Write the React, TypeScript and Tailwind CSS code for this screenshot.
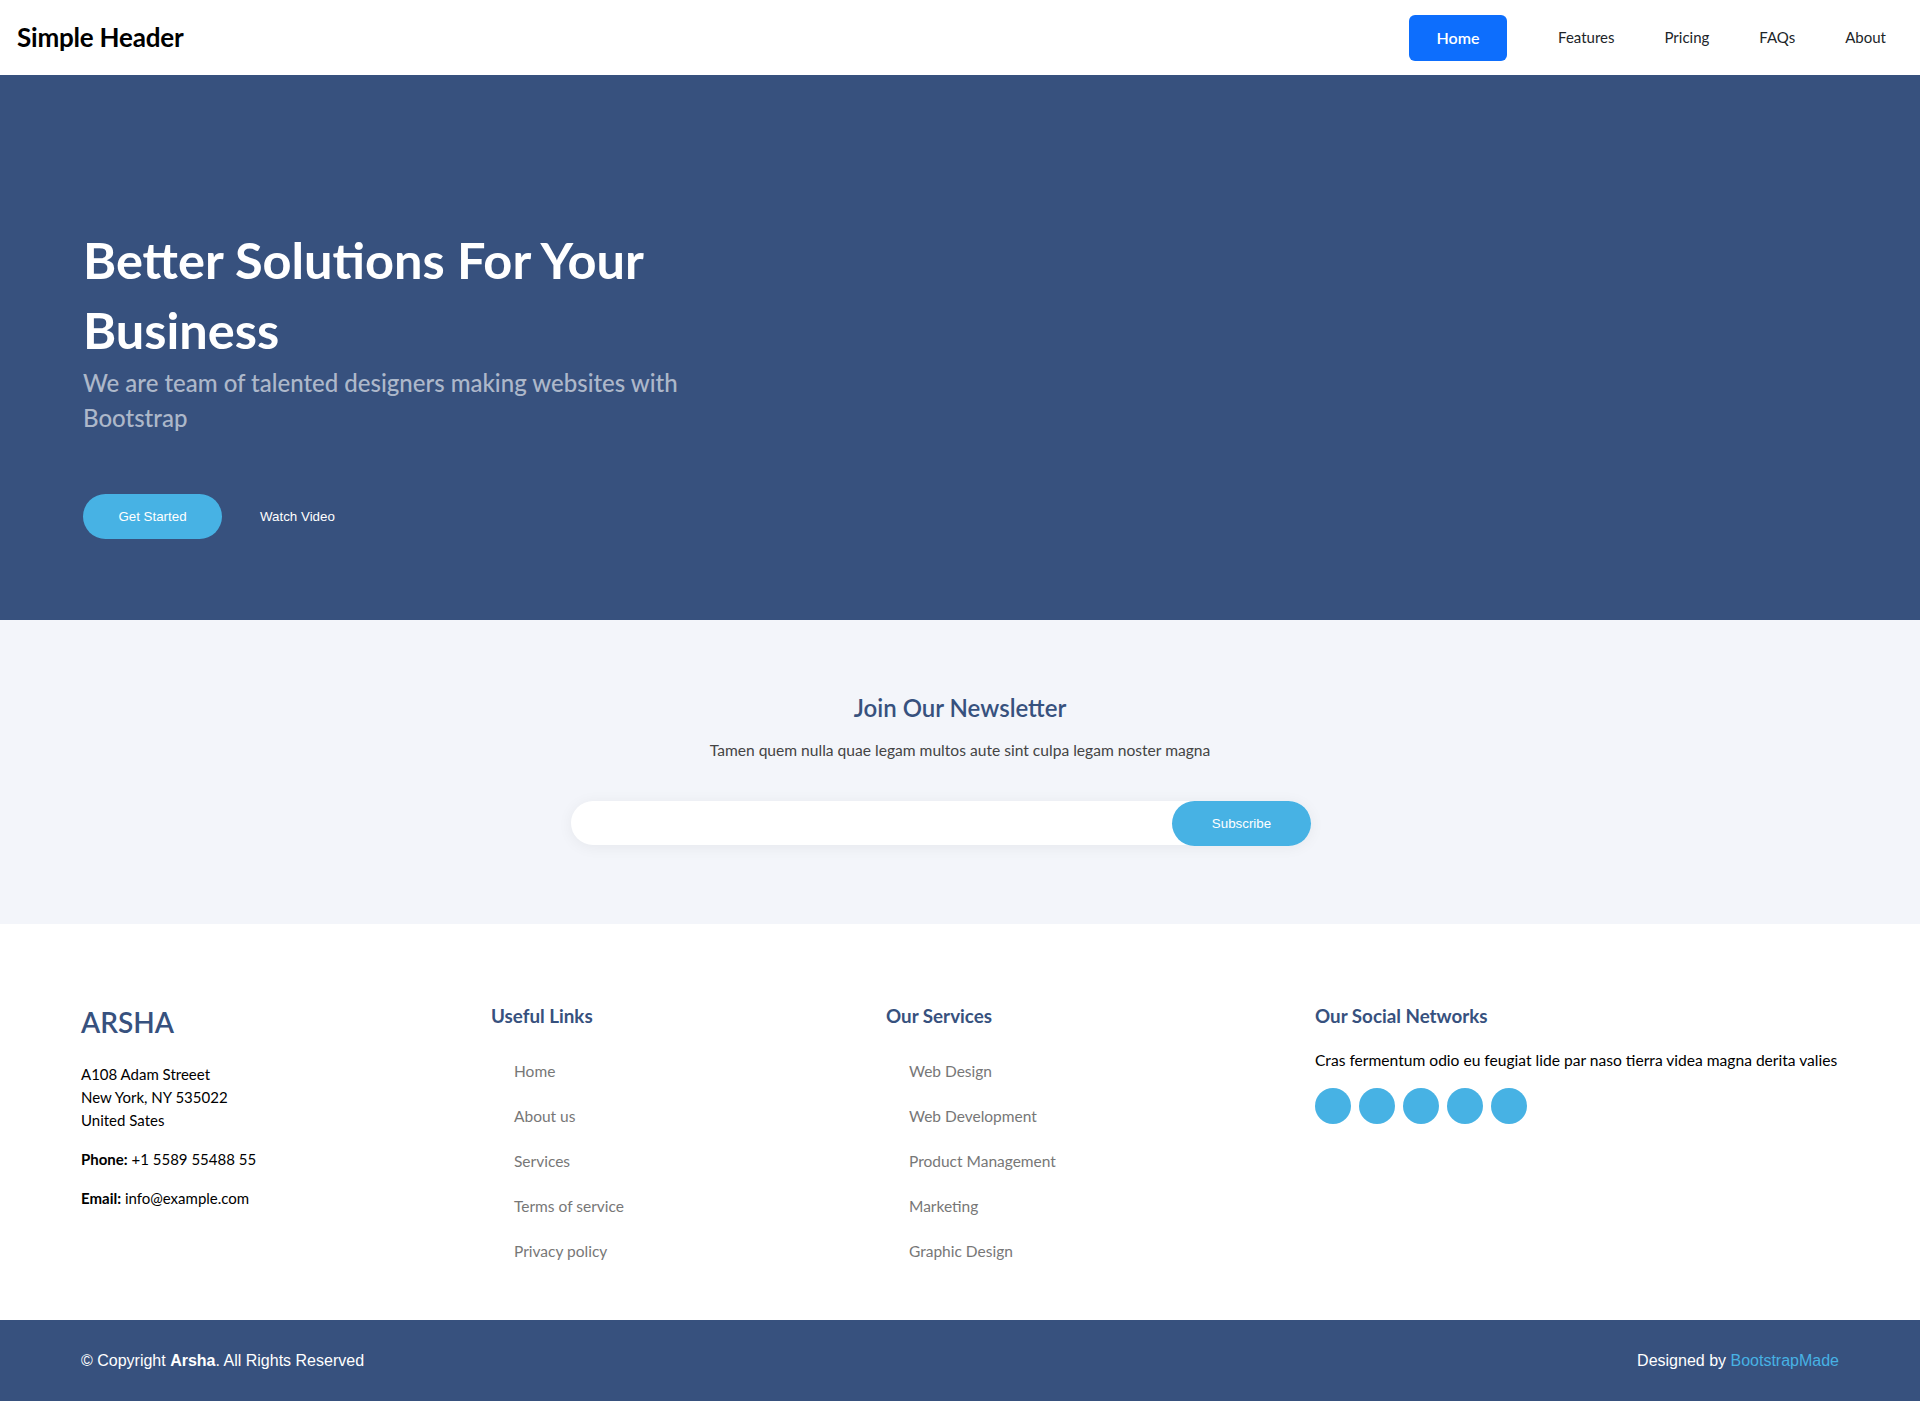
import React from 'react'

const jost = "font-['Lato','Noto_Sans',sans-serif]"
const arial = "font-['Liberation_Sans',Arial,sans-serif]"

const navLinks = ['Features', 'Pricing', 'FAQs', 'About']
const usefulLinks = ['Home', 'About us', 'Services', 'Terms of service', 'Privacy policy']
const services = ['Web Design', 'Web Development', 'Product Management', 'Marketing', 'Graphic Design']

function Header() {
  return (
    <header className={`${jost} h-[75px] bg-white flex items-center justify-between pl-[17px] pr-[9px]`}>
      <span className="text-[26px] font-bold text-black tracking-[-0.2px]">Simple Header</span>
      <nav className="flex items-center">
        <a className="w-[98px] h-[46px] mr-[26px] rounded-md bg-[#0d6efd] text-white text-[16px] font-semibold flex items-center justify-center">
          Home
        </a>
        {navLinks.map((l) => (
          <a key={l} className="px-[25px] text-[15px] text-[#212529]">
            {l}
          </a>
        ))}
      </nav>
    </header>
  )
}

function Hero() {
  return (
    <section className="bg-[#37517e] pt-[150px] pb-[81px] pl-[83px]">
      <div className={`${jost} w-[640px]`}>
        <h1 className="text-[50.5px] leading-[70px] font-bold text-white">Better Solutions For Your Business</h1>
        <h2 className="text-[24px] leading-[35px] font-medium text-white/60">
          We are team of talented designers making websites with Bootstrap
        </h2>
      </div>
      <div className={`${arial} flex items-center mt-[59px] text-[13.33px] text-white`}>
        <button className="w-[139px] h-[45px] rounded-full bg-[#47b2e4]">Get Started</button>
        <button className="ml-[38px]">Watch Video</button>
      </div>
    </section>
  )
}

function Newsletter() {
  return (
    <section className="bg-[#f3f5fa] h-[304px] pt-[76px]">
      <div className={`${jost} text-center`}>
        <h4 className="text-[24px] leading-[24px] font-semibold text-[#37517e]">Join Our Newsletter</h4>
        <p className="mt-[18px] text-[15.6px] leading-[24px] text-[#444444]">
          Tamen quem nulla quae legam multos aute sint culpa legam noster magna
        </p>
      </div>
      <form
        className="mt-[39px] ml-[571px] w-[740px] h-[44px] rounded-full bg-white shadow-[0_2px_15px_rgba(0,0,0,0.06)] flex"
        onSubmit={(e) => e.preventDefault()}
      >
        <input type="email" className="flex-1 px-5 bg-transparent outline-none" />
        <button className={`${arial} w-[139px] h-[45px] rounded-full bg-[#47b2e4] text-white text-[13.33px]`}>
          Subscribe
        </button>
      </form>
    </section>
  )
}

function LinkList({ title, items, indent }: { title: string; items: string[]; indent: string }) {
  return (
    <div>
      <h4 className="text-[18.8px] leading-[22px] font-bold text-[#37517e]">{title}</h4>
      <ul className={`mt-[22px] ${indent}`}>
        {items.map((it) => (
          <li key={it} className="h-[45px] leading-[45px] text-[15.5px] text-[#777777]">
            {it}
          </li>
        ))}
      </ul>
    </div>
  )
}

function Footer() {
  return (
    <footer>
      <div className={`${jost} grid grid-cols-[410px_395px_429px_1fr] pl-[81px] pt-[81px] h-[396px]`}>
        <div className="mt-[3px]">
          <h3 className="text-[28px] leading-[28px] font-semibold text-[#37517e] uppercase">Arsha</h3>
          <p className="mt-[27px] text-[15px] leading-[23px] text-black">
            A108 Adam Streeet <br />
            New York, NY 535022
            <br />
            United Sates
          </p>
          <p className="mt-4 text-[15px] leading-[23px] text-black">
            <strong>Phone:</strong> +1 5589 55488 55
          </p>
          <p className="mt-4 text-[15px] leading-[23px] text-black">
            <strong>Email:</strong> info@example.com
          </p>
        </div>
        <LinkList title="Useful Links" items={usefulLinks} indent="pl-[23px]" />
        <LinkList title="Our Services" items={services} indent="pl-[23px]" />
        <div>
          <h4 className="text-[18.8px] leading-[22px] font-bold text-[#37517e]">Our Social Networks</h4>
          <p className="mt-[21px] text-[15.6px] leading-[24px] text-black">
            Cras fermentum odio eu feugiat lide par naso tierra videa magna derita valies
          </p>
          <div className="mt-4 flex gap-2">
            {[0, 1, 2, 3, 4].map((i) => (
              <a key={i} className="w-9 h-9 rounded-full bg-[#47b2e4]" />
            ))}
          </div>
        </div>
      </div>
      <div className={`${arial} h-[81px] bg-[#37517e] flex items-center justify-between px-[81px] text-[16px] text-white`}>
        <div>
          © Copyright <strong>Arsha</strong>. All Rights Reserved
        </div>
        <div>
          Designed by <a className="text-[#47b2e4]">BootstrapMade</a>
        </div>
      </div>
    </footer>
  )
}

export default function App() {
  return (
    <div className="w-[1920px] bg-white">
      <Header />
      <Hero />
      <Newsletter />
      <Footer />
    </div>
  )
}
